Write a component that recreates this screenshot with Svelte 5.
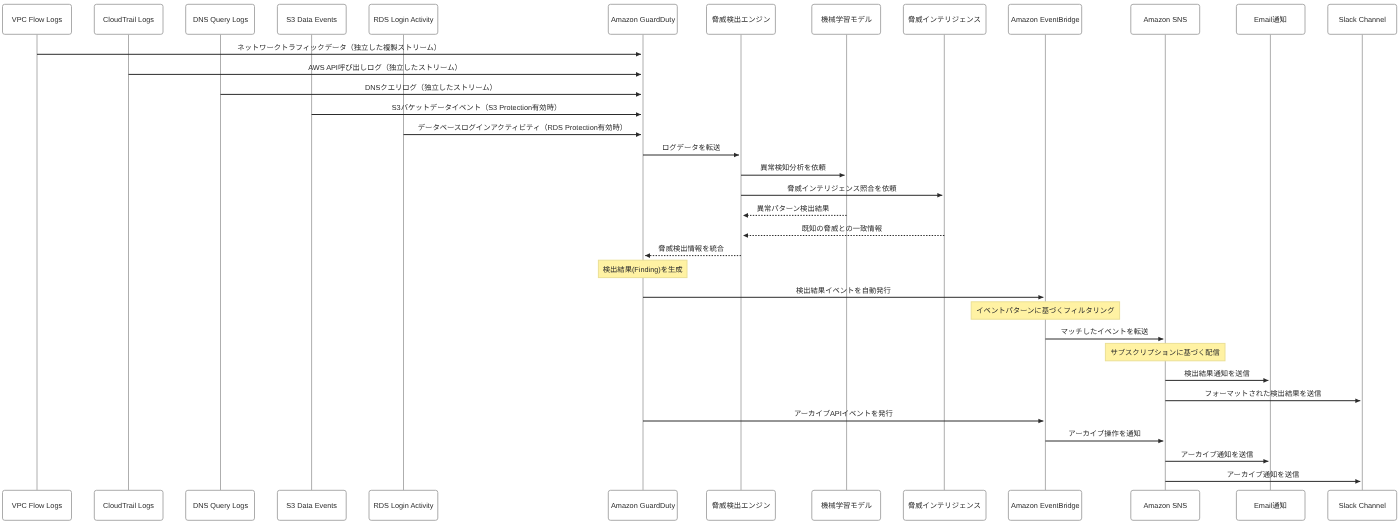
<script>
  // lifeline centre and box edges, in page pixels
  const actors = [
    { name: 'VPC Flow Logs', x: 37, left: 2.5, right: 71.5 },
    { name: 'CloudTrail Logs', x: 128.5, left: 94.3, right: 163 },
    { name: 'DNS Query Logs', x: 220.5, left: 185.7, right: 254.5 },
    { name: 'S3 Data Events', x: 311.6, left: 277.4, right: 346.2 },
    { name: 'RDS Login Activity', x: 403.5, left: 369, right: 437.8 },
    { name: 'Amazon GuardDuty', x: 643, left: 608.3, right: 677.3 },
    { name: '脅威検出エンジン', x: 741, left: 706.5, right: 775.4 },
    { name: '機械学習モデル', x: 846.6, left: 811.8, right: 880.6 },
    { name: '脅威インテリジェンス', x: 944.3, left: 903.4, right: 986 },
    { name: 'Amazon EventBridge', x: 1045.4, left: 1008.4, right: 1081.7 },
    { name: 'Amazon SNS', x: 1165.3, left: 1130.8, right: 1199.7 },
    { name: 'Email通知', x: 1270.4, left: 1236.4, right: 1305 },
    { name: 'Slack Channel', x: 1362.3, left: 1327.8, right: 1396.7 }
  ];

  const messages = [
    { from: 0, to: 5, y: 54.3, text: 'ネットワークトラフィックデータ（独立した複製ストリーム）' },
    { from: 1, to: 5, y: 74.4, text: 'AWS API呼び出しログ（独立したストリーム）' },
    { from: 2, to: 5, y: 94.4, text: 'DNSクエリログ（独立したストリーム）' },
    { from: 3, to: 5, y: 114.5, text: 'S3バケットデータイベント（S3 Protection有効時）' },
    { from: 4, to: 5, y: 134.6, text: 'データベースログインアクティビティ（RDS Protection有効時）' },
    { from: 5, to: 6, y: 155, text: 'ログデータを転送' },
    { from: 6, to: 7, y: 175.2, text: '異常検知分析を依頼' },
    { from: 6, to: 8, y: 195.3, text: '脅威インテリジェンス照合を依頼' },
    { from: 7, to: 6, y: 215.4, text: '異常パターン検出結果', dashed: true },
    { from: 8, to: 6, y: 235.5, text: '既知の脅威との一致情報', dashed: true },
    { from: 6, to: 5, y: 255.6, text: '脅威検出情報を統合', dashed: true },
    { from: 5, to: 9, y: 297.3, text: '検出結果イベントを自動発行' },
    { from: 9, to: 10, y: 339, text: 'マッチしたイベントを転送' },
    { from: 10, to: 11, y: 380.4, text: '検出結果通知を送信' },
    { from: 10, to: 12, y: 400.7, text: 'フォーマットされた検出結果を送信' },
    { from: 5, to: 9, y: 421, text: 'アーカイブAPIイベントを発行' },
    { from: 9, to: 10, y: 441, text: 'アーカイブ操作を通知' },
    { from: 10, to: 11, y: 461.3, text: 'アーカイブ通知を送信' },
    { from: 10, to: 12, y: 481.4, text: 'アーカイブ通知を送信' }
  ];

  const notes = [
    { x: 598.4, y: 260.2, w: 88.6, h: 17.4, text: '検出結果(Finding)を生成' },
    { x: 971.2, y: 301.8, w: 148.4, h: 17.4, text: 'イベントパターンに基づくフィルタリング' },
    { x: 1105.4, y: 343.4, w: 119.6, h: 17.4, text: 'サブスクリプションに基づく配信' }
  ];

  const arrows = messages.map((m) => {
    const x1 = actors[m.from].x;
    const x2 = actors[m.to].x;
    const dir = x2 > x1 ? 1 : -1;
    const tip = x2 - dir * 2;
    return {
      ...m,
      x1,
      tip,
      cx: (x1 + x2) / 2 - 0.8,
      head: `${tip},${m.y} ${tip - dir * 5},${m.y - 2.3} ${tip - dir * 5},${m.y + 2.3}`
    };
  });
</script>

<svg class="diagram" viewBox="0 0 1400 524" width="1400" height="524">
  {#each actors as a}
    <line class="lifeline" x1={a.x} x2={a.x} y1="34.5" y2="490.3" />
  {/each}

  {#each [4.3, 490.3] as top}
    {#each actors as a}
      <rect class="actor" x={a.left} y={top} width={a.right - a.left} height="30" rx="2.2" />
      <text class="label" x={a.x} y={top + 17.5}>{a.name}</text>
    {/each}
  {/each}

  {#each arrows as m}
    <text class="label" x={m.cx} y={m.y - 4.8}>{m.text}</text>
    <line class="msg" class:dashed={m.dashed} x1={m.x1} x2={m.tip} y1={m.y} y2={m.y} />
    <polygon class="head" points={m.head} />
  {/each}

  {#each notes as n}
    <rect class="note" x={n.x} y={n.y} width={n.w} height={n.h} />
    <text class="label" x={n.x + n.w / 2} y={n.y + 11.4}>{n.text}</text>
  {/each}
</svg>

<style>
  :global(body) {
    background: #fff;
  }
  /* the reference is a downscaled render, so everything is slightly soft */
  .diagram {
    display: block;
    filter: blur(0.35px);
  }
  .lifeline {
    stroke: #999;
    stroke-width: 0.8;
  }
  .actor {
    fill: #fff;
    stroke: #a3a3a3;
    stroke-width: 0.9;
  }
  .label {
    font-family: "Liberation Sans", "Noto Sans CJK JP", sans-serif;
    font-size: 7.3px;
    fill: #2c2c2c;
    text-anchor: middle;
    text-rendering: geometricPrecision;
  }
  .msg {
    stroke: #2c2c2c;
    stroke-width: 1;
  }
  .msg.dashed {
    stroke-dasharray: 1.4 1.4;
  }
  .head {
    fill: #2c2c2c;
  }
  .note {
    fill: #fff2a3;
    stroke: #ebe096;
    stroke-width: 1;
  }
</style>
